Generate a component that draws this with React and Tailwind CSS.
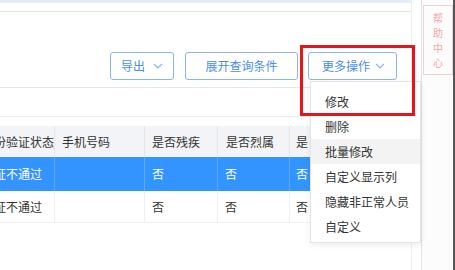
import React from "react";

const font = { fontFamily: '"Noto Sans CJK SC", "Noto Sans", sans-serif' };

function Chevron() {
  return (
    <svg width="10" height="6" viewBox="0 0 10 6" className="ml-auto">
      <path d="M1 1 L5 5 L9 1" fill="none" stroke="#8fb5ea" strokeWidth="1.2" />
    </svg>
  );
}

function Btn({ children, w, chevron }) {
  return (
    <div
      className={`${w} h-[28px] flex items-center rounded-[3px] border border-[#8db4ec] text-[12px] text-[#4a8ee6] bg-white ${chevron ? "pl-[10px] pr-[10px]" : "justify-center"}`}
    >
      <span>{children}</span>
      {chevron && <Chevron />}
    </div>
  );
}

export default function App() {
  const items = ["修改", "删除", "批量修改", "自定义显示列", "隐藏非正常人员", "自定义"];
  return (
    <div className="relative w-[455px] h-[270px] overflow-hidden bg-white flex" style={font}>
      {/* main panel */}
      <div className="w-[412px] h-full flex flex-col border-r border-[#eeeeee]">
        <div className="h-[3px] bg-[#e4eefb]" />
        <div className="h-[9px] border-b border-[#e4e4e4]" />
        <div className="h-[76px] border-b border-[#e8e8e8] flex items-start pt-[40px] pl-[110px]">
          <Btn w="w-[64px]" chevron>导出</Btn>
          <div className="w-[11px]" />
          <Btn w="w-[113px]">展开查询条件</Btn>
          <div className="w-[10px]" />
          <div className="w-[89px] h-[28px] flex items-center rounded-[3px] border border-[#8db4ec] text-[12px] text-[#4a8ee6] pl-[13px] pr-[11px]">
            <span>更多操作</span>
            <Chevron />
          </div>
        </div>
        <div className="h-[29px] border-b border-[#ececec]" />
        <div className="h-[9px]" />
        {/* table */}
        <div className="text-[12px] text-[#333]">
          <div className="flex h-[31px] bg-[#f3f4f7] items-center">
            <div className="w-[55px] h-full flex items-center overflow-hidden border-r border-[#e6e6e6]">
              <span className="-ml-[6px] whitespace-nowrap">份验证状态</span>
            </div>
            <div className="w-[90px] h-full flex items-center pl-[7px] border-r border-[#e6e6e6]">手机号码</div>
            <div className="w-[73px] h-full flex items-center pl-[7px] border-r border-[#e6e6e6]">是否残疾</div>
            <div className="w-[72px] h-full flex items-center pl-[8px] border-r border-[#e6e6e6]">是否烈属</div>
            <div className="flex-1 h-full flex items-center pl-[6px]">是</div>
          </div>
          <div className="flex h-[34px] bg-[#3394ff] text-white items-center">
            <div className="w-[55px] h-full flex items-center overflow-hidden border-r border-[#5aa8ff]">
              <span className="-ml-[6px] whitespace-nowrap">证不通过</span>
            </div>
            <div className="w-[90px] h-full border-r border-[#5aa8ff]" />
            <div className="w-[73px] h-full flex items-center pl-[7px] border-r border-[#5aa8ff]">否</div>
            <div className="w-[72px] h-full flex items-center pl-[7px] border-r border-[#5aa8ff]">否</div>
            <div className="flex-1 h-full flex items-center pl-[6px]">否</div>
          </div>
          <div className="flex h-[32px] bg-white items-center border-b border-[#f0f0f0]">
            <div className="w-[55px] h-full flex items-center overflow-hidden border-r border-[#eeeeee]">
              <span className="-ml-[6px] whitespace-nowrap">证不通过</span>
            </div>
            <div className="w-[90px] h-full border-r border-[#eeeeee]" />
            <div className="w-[73px] h-full flex items-center pl-[7px] border-r border-[#eeeeee]">否</div>
            <div className="w-[72px] h-full flex items-center pl-[7px] border-r border-[#eeeeee]">否</div>
            <div className="flex-1 h-full flex items-center pl-[6px]">否</div>
          </div>
        </div>
      </div>
      <div className="w-[9px]" />
      {/* sidebar */}
      <div className="w-[32px] h-full border-l border-[#e2e2e2] bg-[#fcfcfc] pt-[5px] pl-[1px]">
        <div className="w-[30px] h-[70px] border border-[#f6d0d0] flex flex-col items-center justify-center gap-[3px] text-[10px] leading-[12px] text-[#f2a8a8]">
          <span>帮</span>
          <span>助</span>
          <span>中</span>
          <span>心</span>
        </div>
      </div>
      <div className="w-[2px] h-full bg-[#555555]" />

      {/* dropdown menu */}
      <div className="absolute left-[310px] top-[81px] w-[111px] h-[162px] bg-white border border-[#e4e4e4] shadow-[0_2px_6px_rgba(0,0,0,0.08)] pt-[7px] text-[12px] text-[#333]">
        {items.map((t, i) => (
          <div
            key={t}
            className={`h-[25px] flex items-center pl-[14px] whitespace-nowrap ${i === 2 ? "bg-[#f3f3f3]" : ""}`}
          >
            {t}
          </div>
        ))}
      </div>
      {/* red highlight */}
      <div className="absolute left-[300px] top-[45px] w-[115px] h-[71px] border-[3px] border-[#e8141b]" />
    </div>
  );
}
